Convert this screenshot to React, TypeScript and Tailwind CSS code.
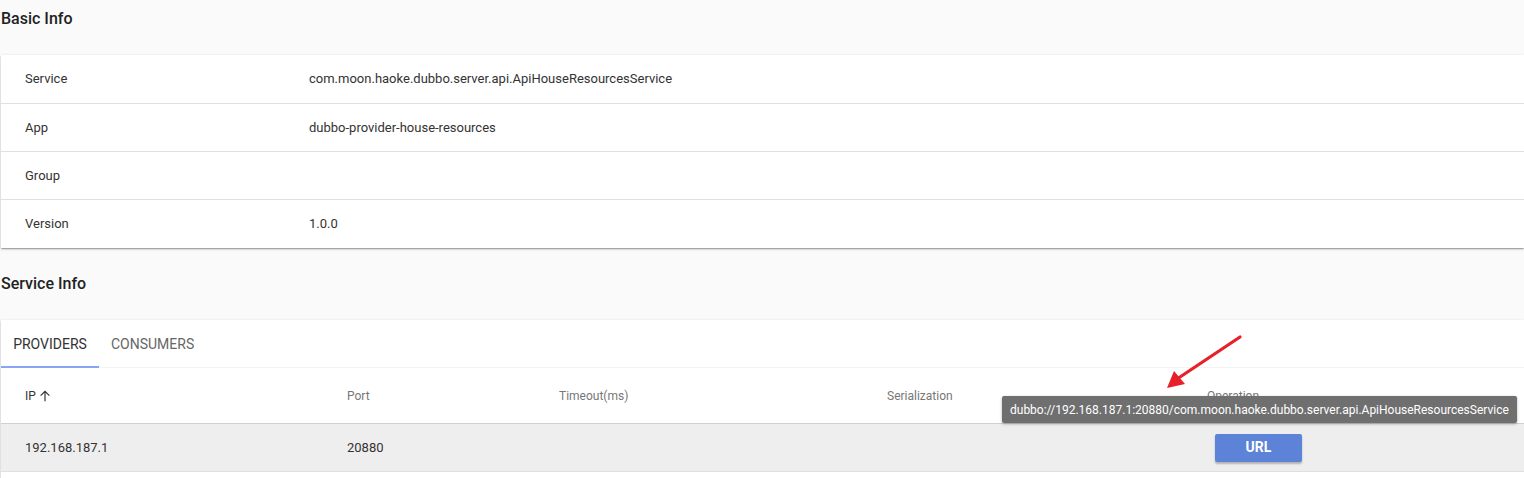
import React from "react";

const font = { fontFamily: "Roboto, 'Noto Sans', Arial, sans-serif" };

function InfoRow({ label, value, last, first }: { label: string; value: string; last?: boolean; first?: boolean }) {
  return (
    <div
      className={
        "flex items-center text-[13px] text-[#333] " +
        (first ? "h-[49px] " : "h-12 ") +
        (last ? "" : "border-b border-[#e0e0e0]")
      }
    >
      <div className="w-[284px] pl-6">{label}</div>
      <div className="pl-6">{value}</div>
    </div>
  );
}

export default function App() {
  return (
    <div className="relative min-h-[478px] w-[1524px] overflow-hidden bg-[#fafafa]" style={font}>
      {/* Basic Info */}
      <div className="h-[55px] pl-[1px] pt-[8px]">
        <div className="text-[16px] font-medium leading-[22px] text-[#222]">Basic Info</div>
      </div>
      <div className="ml-[1px] bg-white shadow-[0_1px_3px_rgba(0,0,0,0.2),0_1px_1px_rgba(0,0,0,0.14),0_2px_1px_-1px_rgba(0,0,0,0.12)]">
        <InfoRow first label="Service" value="com.moon.haoke.dubbo.server.api.ApiHouseResourcesService" />
        <InfoRow label="App" value="dubbo-provider-house-resources" />
        <InfoRow label="Group" value="" />
        <InfoRow label="Version" value="1.0.0" last />
      </div>

      {/* Service Info */}
      <div className="mt-[18px] h-[54px] pl-[1px] pt-[7px]">
        <div className="text-[16px] font-medium leading-[22px] text-[#222]">Service Info</div>
      </div>
      <div className="ml-[1px] bg-white shadow-[0_1px_3px_rgba(0,0,0,0.2),0_1px_1px_rgba(0,0,0,0.14)]">
        <div className="flex h-12 border-b border-[#f3f3f3]">
          <div className="relative flex w-[98px] items-center justify-center pt-[1px] text-[14px] font-normal uppercase text-[#333]">
            PROVIDERS
            <div className="absolute bottom-[-1px] left-0 h-[2px] w-full bg-[#8ba3f3]" />
          </div>
          <div className="flex items-center px-3 pt-[1px] text-[14px] font-normal uppercase text-[#666]">CONSUMERS</div>
        </div>
        <div className="flex h-[56px] items-center border-b border-[#d0d0d0] text-[12px] text-[#777]">
          <div className="flex w-[322px] items-center pl-6 text-[#333]">
            IP
            <svg width="14" height="14" viewBox="0 0 24 24" className="ml-[2px]" fill="none" stroke="#333" strokeWidth="2">
              <path d="M12 21V4M4.5 11.5 12 4l7.5 7.5" />
            </svg>
          </div>
          <div className="w-[212px] pl-6">Port</div>
          <div className="w-[328px] pl-6">Timeout(ms)</div>
          <div className="w-[320px] pl-6">Serialization</div>
          <div className="pl-6">Operation</div>
        </div>
        <div className="flex h-12 items-center border-b border-[#e0e0e0] bg-[#eeeeee] text-[13px] text-[#333]">
          <div className="w-[322px] pl-6">192.168.187.1</div>
          <div className="w-[212px] pl-6">20880</div>
          <div className="w-[328px] pl-6"></div>
          <div className="w-[320px] pl-6"></div>
          <div className="pl-6">
            <button className="ml-2 h-7 w-[87px] rounded-[2px] bg-[#5c83d7] text-[14px] font-bold text-white shadow-[0_2px_2px_rgba(0,0,0,0.25)]">
              URL
            </button>
          </div>
        </div>
        <div className="h-[6px]" />
      </div>

      {/* Tooltip */}
      <div className="absolute left-[1002px] top-[396px] flex h-[27px] items-center rounded-[2px] bg-[#6f6f6f] px-2 text-[12px] font-normal text-white shadow-[0_1px_3px_rgba(0,0,0,0.3)]">
        dubbo://192.168.187.1:20880/com.moon.haoke.dubbo.server.api.ApiHouseResourcesService
      </div>

      {/* Red arrow */}
      <svg className="absolute left-[1160px] top-[330px]" width="90" height="65" viewBox="0 0 90 65">
        <line x1="80" y1="7" x2="17" y2="49" stroke="#e8202a" strokeWidth="3.2" strokeLinecap="round" />
        <polygon points="7,58 14,41 25,54" fill="#e8202a" />
      </svg>
    </div>
  );
}
